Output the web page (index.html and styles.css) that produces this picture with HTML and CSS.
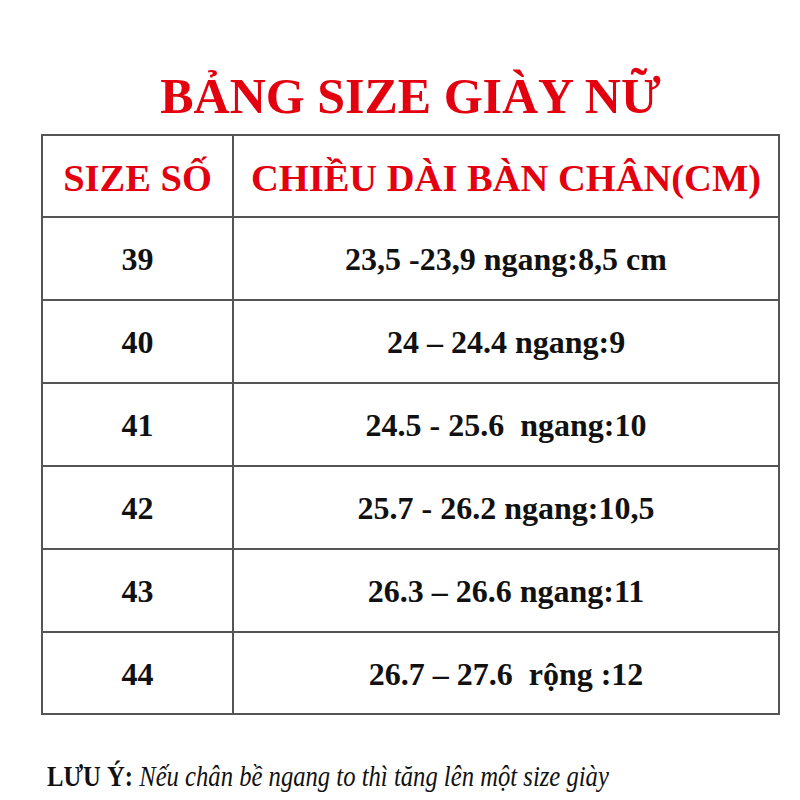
FILE: index.html
```html
<!DOCTYPE html>
<html lang="vi">
<head>
<meta charset="utf-8">
<title>Bảng size giày nữ</title>
<link rel="stylesheet" href="styles.css">
</head>
<body>
<div class="page">
  <h1 class="title">BẢNG SIZE GIÀY NỮ</h1>
  <div class="table">
    <div class="cell head">SIZE SỐ</div>
    <div class="cell head">CHIỀU DÀI BÀN CHÂN(CM)</div>
    <div class="cell">39</div>
    <div class="cell">23,5 -23,9 ngang:8,5 cm</div>
    <div class="cell">40</div>
    <div class="cell">24 – 24.4 ngang:9</div>
    <div class="cell">41</div>
    <div class="cell">24.5 - 25.6  ngang:10</div>
    <div class="cell">42</div>
    <div class="cell">25.7 - 26.2 ngang:10,5</div>
    <div class="cell">43</div>
    <div class="cell">26.3 – 26.6 ngang:11</div>
    <div class="cell last">44</div>
    <div class="cell last">26.7 – 27.6  rộng :12</div>
  </div>
  <p class="note"><span class="note-inner"><b>LƯU Ý:</b> <i>Nếu chân bề ngang to thì tăng lên một size giày</i></span></p>
</div>
</body>
</html>
```

FILE: styles.css
```css
html, body {
  margin: 0;
  padding: 0;
  background: #ffffff;
}

body {
  font-family: "Liberation Serif", "Times New Roman", serif;
  color: #111111;
  width: 800px;
  height: 800px;
  overflow: hidden;
}

.page {
  padding: 71px 0 0 41px;
}

.title {
  margin: 0 0 13px 0;
  width: 739px;
  text-align: center;
  font-size: 50px;
  line-height: 50px;
  font-weight: bold;
  color: #e3000f;
}

.table {
  display: grid;
  grid-template-columns: 191px 546px;
  grid-template-rows: 82px 83px 83px 83px 83px 83px 82px;
  width: 739px;
  border-top: 2px solid #555555;
  border-left: 2px solid #555555;
  box-sizing: border-box;
}

.cell {
  display: flex;
  align-items: center;
  justify-content: center;
  border-right: 2px solid #555555;
  border-bottom: 2px solid #555555;
  font-weight: bold;
  font-size: 32px;
  line-height: 32px;
  padding-top: 1px;
  white-space: pre;
  box-sizing: border-box;
}

.cell.head {
  font-size: 38.5px;
  line-height: 38.5px;
  padding-top: 4px;
  color: #e3000f;
}

.note {
  margin: 0;
  padding-top: 47px;
  padding-left: 6px;
  font-size: 29px;
  line-height: 29px;
  white-space: nowrap;
}

.note-inner {
  display: inline-block;
  transform: scaleX(0.85);
  transform-origin: left center;
}

.note b {
  font-weight: bold;
}

.note i {
  font-style: italic;
}
```
